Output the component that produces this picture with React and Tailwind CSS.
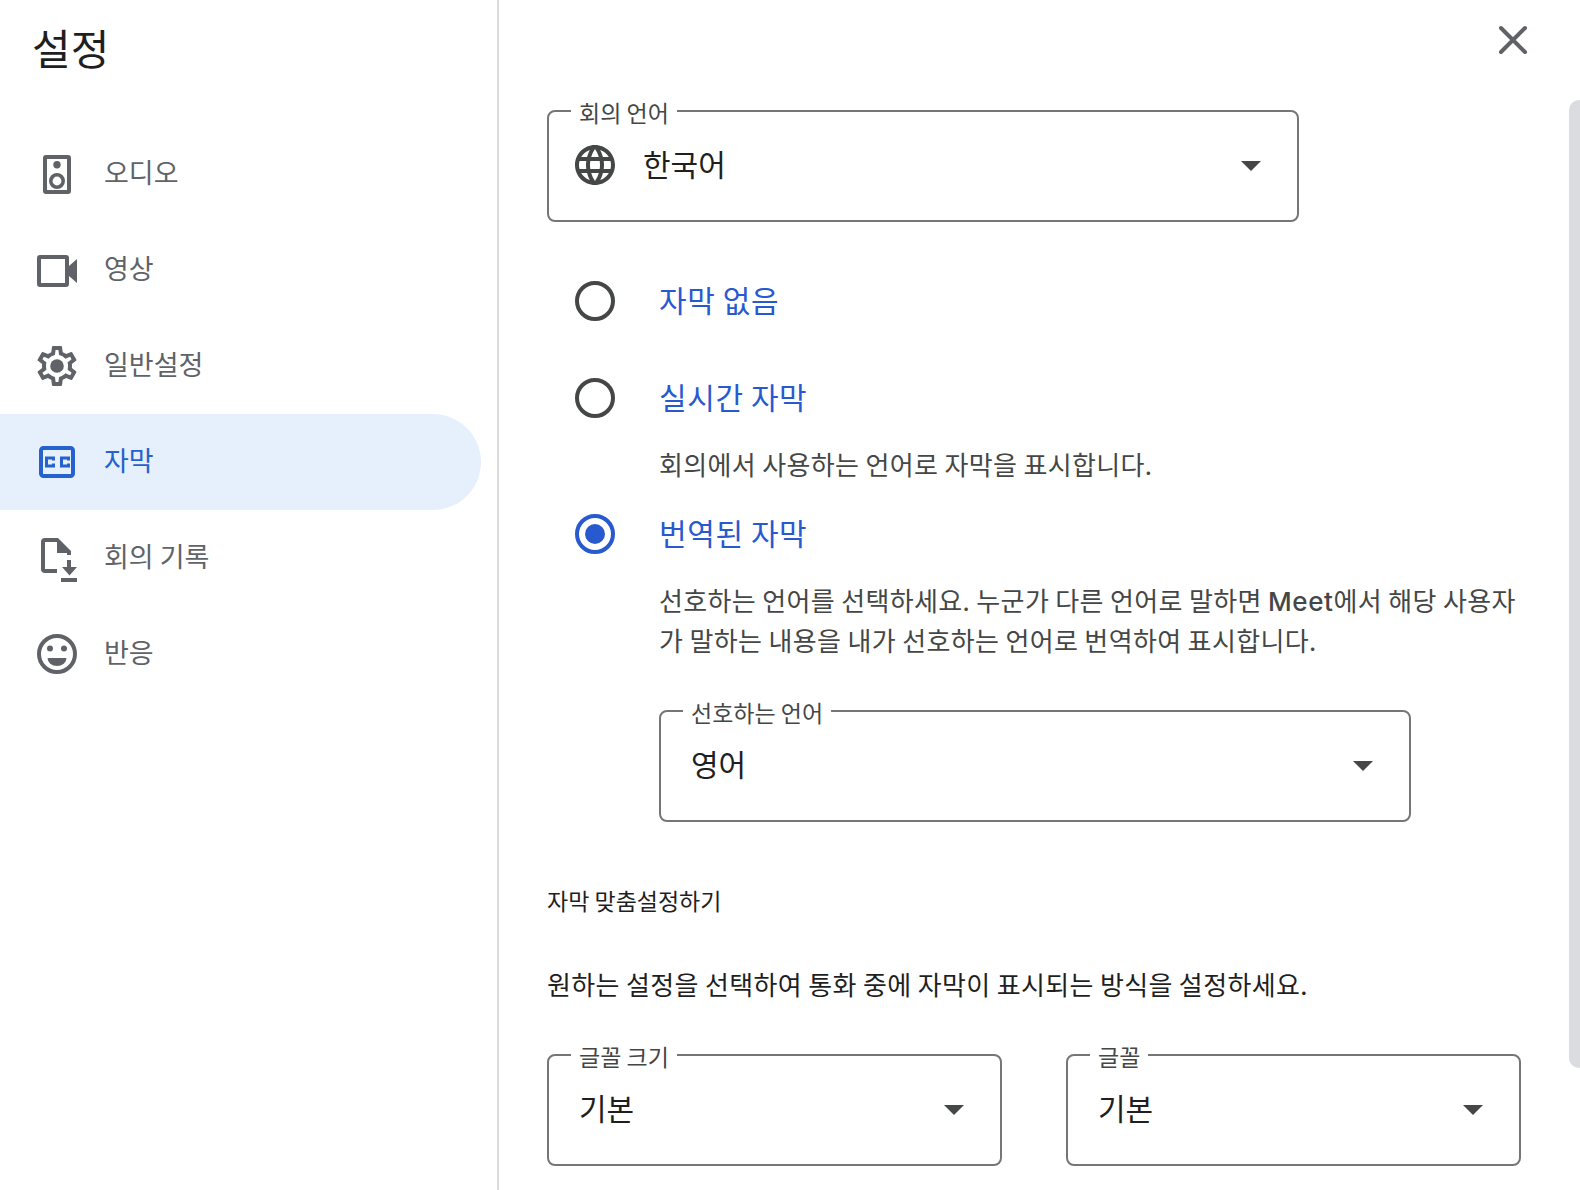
import React from "react";
const F = '[font-family:"Noto_Sans_CJK_KR","Roboto",sans-serif]';
const Caret = () => (<svg width="20" height="10" viewBox="0 0 20 10" className="shrink-0"><path d="M0 0h20L10 10z" fill="#444746"/></svg>);
const Speaker = ({c}) => (<svg width="40" height="40" viewBox="0 0 40 40" fill={c}><path fillRule="evenodd" d="M9 1h22a3 3 0 0 1 3 3v33a3 3 0 0 1-3 3H9a3 3 0 0 1-3-3V4a3 3 0 0 1 3-3zm1 4v31h20V5z"/><circle cx="20" cy="10.7" r="3.7"/><circle cx="20" cy="27" r="6.2" fill="none" stroke={c} strokeWidth="3.6"/></svg>);
const Video = ({c}) => (<svg width="40" height="40" viewBox="0 0 40 40" fill={c}><path fillRule="evenodd" d="M3 5h26a3 3 0 0 1 3 3v26a3 3 0 0 1-3 3H3a3 3 0 0 1-3-3V8a3 3 0 0 1 3-3zm1 4v24h24V9z"/><path d="M32 16l8-7v24l-8-7z"/></svg>);
const Gear = ({c}) => (<svg width="48" height="48" viewBox="0 0 24 24" fill={c} className="-m-1"><path d="M19.43 12.98c.04-.32.07-.64.07-.98s-.03-.66-.07-.98l2.11-1.65c.19-.15.24-.42.12-.64l-2-3.46c-.12-.22-.39-.3-.61-.22l-2.49 1c-.52-.4-1.08-.73-1.69-.98l-.38-2.65A.488.488 0 0 0 14 2h-4c-.25 0-.46.18-.49.42l-.38 2.65c-.61.25-1.17.59-1.69.98l-2.49-1c-.23-.09-.49 0-.61.22l-2 3.46c-.13.22-.07.49.12.64l2.11 1.65c-.04.32-.07.65-.07.98s.03.66.07.98l-2.11 1.65c-.19.15-.24.42-.12.64l2 3.46c.12.22.39.3.61.22l2.49-1c.52.4 1.08.73 1.69.98l.38 2.65c.03.24.24.42.49.42h4c.25 0 .46-.18.49-.42l.38-2.65c.61-.25 1.17-.59 1.69-.98l2.49 1c.23.09.49 0 .61-.22l2-3.46c.12-.22.07-.49-.12-.64l-2.11-1.65zM17.45 11.27c.04.31.05.52.05.73s-.02.43-.05.73l-.14 1.13.89.7 1.08.84-.7 1.21-1.27-.51-1.04-.42-.9.68c-.43.32-.84.56-1.25.73l-1.06.43-.16 1.13-.2 1.35h-1.4l-.19-1.35-.16-1.13-1.06-.43c-.43-.18-.83-.41-1.23-.71l-.91-.7-1.06.43-1.27.51-.7-1.21 1.08-.84.89-.7-.14-1.13c-.03-.31-.05-.54-.05-.74s.02-.43.05-.73l.14-1.13-.89-.7-1.08-.84.7-1.21 1.27.51 1.04.42.9-.68c.43-.32.84-.56 1.25-.73l1.06-.43.16-1.13.2-1.35h1.39l.19 1.35.16 1.13 1.06.43c.43.18.83.41 1.23.71l.91.7 1.06-.43 1.27-.51.7 1.21-1.07.85-.89.7.14 1.13z"/><circle cx="12" cy="12" r="3.4"/></svg>);
const CC = ({c}) => (<svg width="40" height="40" viewBox="0 0 40 40"><rect x="4" y="6" width="32" height="28" rx="2.5" fill="none" stroke={c} strokeWidth="4"/><path d="M16.500 18.500v-2.500h-7v8h7v-2.500M31.500 18.500v-2.500h-7v8h7v-2.500" fill="none" stroke={c} strokeWidth="3"/></svg>);
const DocDown = ({c}) => (<svg width="40" height="44" viewBox="0 0 40 44" fill={c} className="mt-[4px]"><path d="M8 0H21L34 13V17H30V15H20V4H8V31H20V35H8a4 4 0 0 1-4-4V4a4 4 0 0 1 4-4z"/><path d="M30 22h4v7h6l-7.500 8.500-7.500-8.500h5zM24 40h16v4H24z"/></svg>);
const Smile = ({c}) => (<svg width="40" height="40" viewBox="0 0 40 40" fill={c}><circle cx="20" cy="20" r="18" fill="none" stroke={c} strokeWidth="4"/><circle cx="13" cy="14.500" r="3"/><circle cx="27" cy="14.500" r="3"/><path d="M10.500 24h19a9.500 8 0 0 1-19 0z"/></svg>);
const Globe = () => (<svg width="48" height="48" viewBox="0 0 24 24" fill="#444746"><path d="M11.99 2C6.47 2 2 6.48 2 12s4.47 10 9.99 10C17.52 22 22 17.52 22 12S17.52 2 11.99 2zm6.93 6h-2.95a15.65 15.65 0 0 0-1.38-3.56A8.03 8.03 0 0 1 18.92 8zM12 4.04c.83 1.2 1.48 2.53 1.91 3.96h-3.820c.43-1.43 1.08-2.76 1.91-3.96zM4.26 14C4.1 13.36 4 12.69 4 12s.1-1.36.26-2h3.38c-.08.66-.14 1.32-.14 2s.06 1.34.14 2H4.26zm.82 2h2.95c.32 1.25.78 2.45 1.38 3.56A7.987 7.987 0 0 1 5.08 16zm2.95-8H5.08a7.987 7.987 0 0 1 4.33-3.56A15.65 15.65 0 0 0 8.03 8zM12 19.96c-.83-1.2-1.48-2.53-1.91-3.96h3.82c-.43 1.43-1.08 2.76-1.91 3.96zM14.34 14H9.66c-.09-.66-.16-1.32-.16-2s.07-1.35.16-2h4.68c.09.65.16 1.32.16 2s-.07 1.34-.16 2zm.25 5.56c.6-1.11 1.06-2.31 1.38-3.56h2.95a8.03 8.03 0 0 1-4.33 3.56zM16.36 14c.08-.66.14-1.32.14-2s-.06-1.34-.14-2h3.38c.16.64.26 1.31.26 2s-.1 1.36-.26 2h-3.38z"/></svg>);

const nav = [["오디오",Speaker],["영상",Video],["일반설정",Gear],["자막",CC,true],["회의 기록",DocDown],["반응",Smile]];

function Select({label,value,icon,className}){
  return (
    <div className={`relative h-[112px] border-2 border-[#747775] rounded-lg flex items-start pl-[30px] pr-[36px] pt-[31px] ${className}`}>
      <span className="absolute -top-[13px] left-[22px] px-2 bg-white text-[23px] leading-[26px] text-[#444746]">{label}</span>
      {icon && <span className="mr-[24px] -ml-[8px] -mt-[2px] shrink-0"><Globe/></span>}
      <span className="flex-1 text-[30px] leading-[40px] text-[#1f1f1f]">{value}</span>
      <span className="mt-[18px]"><Caret/></span>
    </div>
  );
}
function Radio({on,label}){
  return (
    <div className="flex items-center h-[40px] pl-[28px]">
      {on ? <span className="w-[40px] h-[40px] rounded-full border-[4px] border-[#2859cf] flex items-center justify-center shrink-0"><span className="w-[20px] h-[20px] rounded-full bg-[#2859cf]"/></span>
          : <span className="w-[40px] h-[40px] rounded-full border-[4px] border-[#444746] shrink-0"/>}
      <span className="ml-[44px] -mt-[5px] text-[30px] leading-[40px] tracking-[0.6px] text-[#2859cf]">{label}</span>
    </div>
  );
}
export default function App(){
  return (
    <div className={`w-[1580px] h-[1190px] overflow-hidden flex bg-white ${F}`}>
      <aside className="w-[499px] shrink-0 border-r-2 border-[#dadce0] h-full">
        <h1 className="pl-[32px] pt-[19px] h-[126px] text-[42px] leading-[56px] text-[#1f1f1f]">설정</h1>
        <nav className="w-[481px] flex flex-col">
          {nav.map(([t,I,a])=>(
            <div key={t} className={`h-[96px] flex items-center pl-[37px] rounded-r-[48px] ${a?"bg-[#e6effc]":""}`}>
              <I c={a?"#2561cf":"#5f6368"}/>
              <span className={`ml-[27px] -mt-[4px] text-[27px] leading-[36px] ${a?"text-[#2561cf]":"text-[#5f6368]"}`}>{t}</span>
            </div>
          ))}
        </nav>
      </aside>
      <main className="relative flex-1 h-full pl-[48px] pt-[110px] overflow-hidden">
        <button className="absolute top-[25px] right-[52px]">
          <svg width="30" height="30" viewBox="0 0 30 30" stroke="#5f6368" strokeWidth="4" strokeLinecap="round"><path d="M3 3l24 24M27 3L3 27"/></svg>
        </button>
        <div className="absolute right-0 top-[100px] w-[11px] h-[968px] rounded-l-[10px] bg-[#dadce0]"/>
        <Select label="회의 언어" value="한국어" icon className="w-[752px]"/>
        <div className="mt-[59px]"><Radio label="자막 없음"/></div>
        <div className="mt-[57px]"><Radio label="실시간 자막"/></div>
        <p className="mt-[26px] ml-[112px] text-[26px] leading-[40px] text-[#444746] tracking-[0.35px]">회의에서 사용하는 언어로 자막을 표시합니다.</p>
        <div className="mt-[30px]"><Radio on label="번역된 자막"/></div>
        <p className="mt-[26px] ml-[112px] w-[870px] text-[26px] leading-[40px] text-[#444746] tracking-[0.35px] whitespace-nowrap">
          <span className="block h-[40px]">선호하는 언어를 선택하세요. 누군가 다른 언어로 말하면 <span className="[font-family:Inter] font-medium tracking-[0.6px]">Meet</span>에서 해당 사용자</span>
          <span className="block h-[40px]">가 말하는 내용을 내가 선호하는 언어로 번역하여 표시합니다.</span>
        </p>
        <Select label="선호하는 언어" value="영어" className="w-[752px] mt-[50px] ml-[112px]"/>
        <h2 className="mt-[58px] text-[23px] leading-[40px] text-[#1f1f1f]">자막 맞춤설정하기</h2>
        <p className="mt-[44px] text-[26px] leading-[40px] text-[#1f1f1f] tracking-[0.35px]">원하는 설정을 선택하여 통화 중에 자막이 표시되는 방식을 설정하세요.</p>
        <div className="flex gap-[64px] mt-[50px]">
          <Select label="글꼴 크기" value="기본" className="w-[455px]"/>
          <Select label="글꼴" value="기본" className="w-[455px]"/>
        </div>
      </main>
    </div>
  );
}
